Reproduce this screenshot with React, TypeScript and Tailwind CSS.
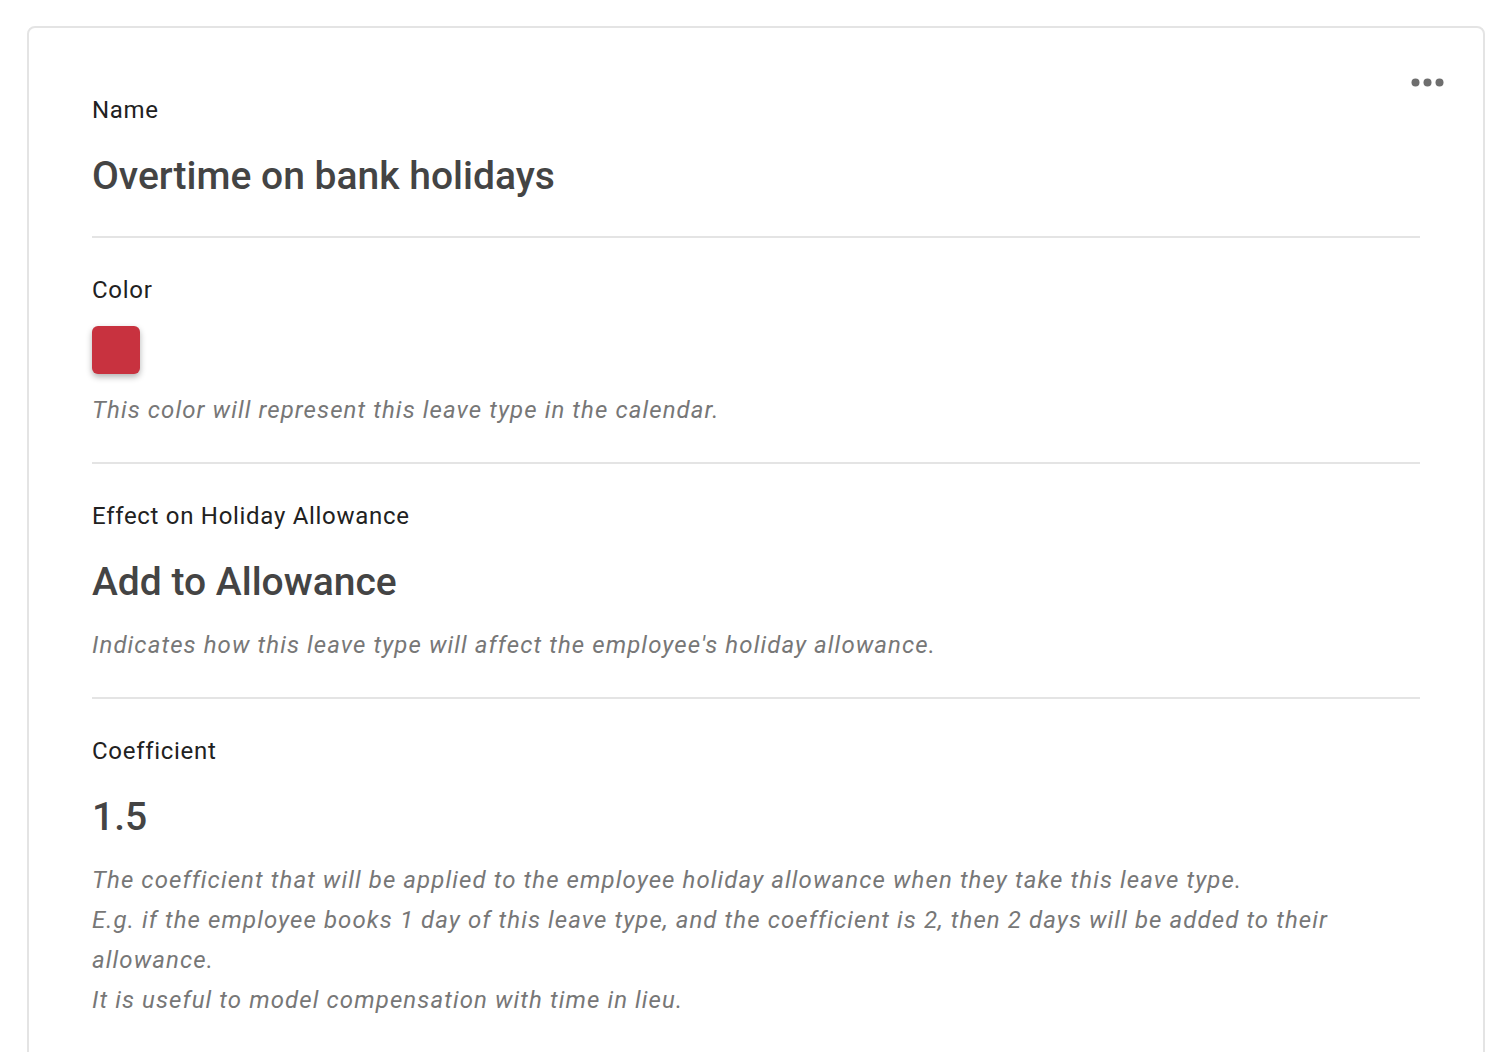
const Field = ({
  label,
  children,
  description,
  className = "",
}: {
  label: string;
  children: React.ReactNode;
  description?: React.ReactNode;
  className?: string;
}) => (
  <div className={`pt-[36px] ${className}`}>
    <div className="text-[24px] leading-[32px] tracking-[0.7px] text-[#212121]">{label}</div>
    {children}
    {description}
  </div>
);

const Value = ({ children }: { children: React.ReactNode }) => (
  <div className="mt-[26px] text-[39px] leading-[48px] font-medium text-[#444444]">{children}</div>
);

const Hint = ({ children, className = "" }: { children: React.ReactNode; className?: string }) => (
  <div className={`text-[24px] leading-[40px] italic tracking-[1.1px] text-[#777777] ${className}`}>{children}</div>
);

export default function App() {
  return (
    <div className="min-h-screen bg-white pt-[26px] px-[27px]" style={{ fontFamily: "Roboto, 'Noto Sans', sans-serif" }}>
      <div className="relative rounded-lg border-2 border-[#e4e4e4] pt-[30px] px-[63px] pb-[40px]">
        <button className="absolute right-[39px] top-[50px] p-0">
          <svg width="33" height="9" viewBox="0 0 33 9" fill="#6e6e6e">
            <circle cx="4.5" cy="4.5" r="4" />
            <circle cx="16.5" cy="4.5" r="4" />
            <circle cx="28.5" cy="4.5" r="4" />
          </svg>
        </button>

        <Field label="Name" className="pb-[36px] border-b-2 border-[#e4e4e4]">
          <Value>Overtime on bank holidays</Value>
        </Field>

        <Field
          label="Color"
          className="pb-[32px] border-b-2 border-[#e4e4e4]"
          description={<Hint className="mt-[16px]">This color will represent this leave type in the calendar.</Hint>}
        >
          <div className="mt-[20px] h-[48px] w-[48px] rounded-md bg-[#c8323f] shadow-[0_3px_6px_rgba(0,0,0,0.3)]" />
        </Field>

        <Field
          label="Effect on Holiday Allowance"
          className="pb-[32px] border-b-2 border-[#e4e4e4]"
          description={<Hint className="mt-[19px]">Indicates how this leave type will affect the employee's holiday allowance.</Hint>}
        >
          <Value>Add to Allowance</Value>
        </Field>

        <Field
          label="Coefficient"
          description={
            <Hint className="mt-[19px]">
              <div>The coefficient that will be applied to the employee holiday allowance when they take this leave type.</div>
              <div>
                E.g. if the employee books 1 day of this leave type, and the coefficient is 2, then 2 days will be added to their
                <br />
                allowance.
              </div>
              <div>It is useful to model compensation with time in lieu.</div>
            </Hint>
          }
        >
          <Value>1.5</Value>
        </Field>
      </div>
    </div>
  );
}
